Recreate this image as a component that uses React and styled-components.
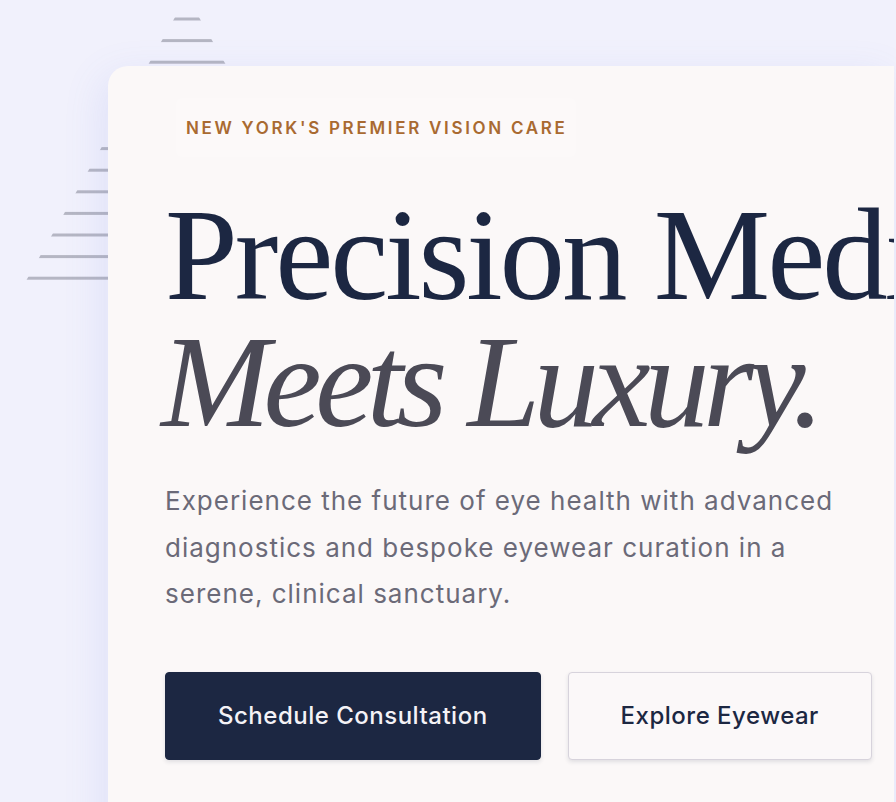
import styled, { createGlobalStyle } from 'styled-components'

const GlobalStyle = createGlobalStyle`
  html, body {
    margin: 0;
    padding: 0;
    background: #f1f1fc;
    overflow: hidden;
  }
  * {
    box-sizing: border-box;
  }
`

const Page = styled.main`
  position: relative;
  min-height: 100vh;
  padding: 66px 0 0 108px;
  overflow: hidden;
`

const Stripes = styled.svg`
  position: absolute;
  left: 22px;
  top: -4px;
  width: 330px;
  height: 292px;
  z-index: 0;
`

const Card = styled.section`
  position: relative;
  z-index: 1;
  width: 786px;
  min-height: 820px;
  padding: 32px 0 0 57px;
  background: #fbf8f8;
  border-radius: 20px 0 0 0;
  box-shadow: -6px 10px 40px rgba(96, 112, 220, 0.12);
  overflow: hidden;
`

const Eyebrow = styled.p`
  display: inline-block;
  margin: 0 0 0 11px;
  padding: 20px 8px 19px 10px;
  background: rgba(255, 255, 255, 0.22);
  border-radius: 6px;
  color: #a96a31;
  font-family: Inter, 'Noto Sans', sans-serif;
  font-size: 17px;
  font-weight: 600;
  letter-spacing: 2.7px;
  line-height: 20px;
  text-transform: uppercase;
`

const Heading = styled.h1`
  margin: 34px 0 0 0;
  font-family: 'Liberation Serif', 'DejaVu Serif', serif;
  font-weight: 400;
  font-size: 131px;
  line-height: 127px;
  color: #1c2742;
  white-space: nowrap;
`

const Line = styled.span`
  display: block;
  font-style: ${(p) => (p.$italic ? 'italic' : 'normal')};
  color: ${(p) => (p.$italic ? '#4b4a56' : '#1c2742')};
  letter-spacing: ${(p) => (p.$italic ? '-0.05em' : '-0.024em')};
  margin-left: ${(p) => (p.$italic ? '-4px' : '0')};
`

const Lead = styled.p`
  margin: 33px 0 0 0;
  max-width: 700px;
  font-family: Inter, 'Noto Sans', sans-serif;
  font-size: 26px;
  line-height: 46.5px;
  letter-spacing: 1px;
  color: #6b6a78;
`

const Actions = styled.div`
  display: flex;
  gap: 27px;
  margin-top: 54px;
`

const Button = styled.button`
  height: 88px;
  padding: 0 52px;
  border-radius: 4px;
  font-family: Inter, 'Noto Sans', sans-serif;
  font-size: 24px;
  font-weight: 500;
  letter-spacing: 0.5px;
  cursor: pointer;
  border: 1.5px solid ${(p) => (p.$primary ? '#1c2742' : '#d7d3dc')};
  background: ${(p) => (p.$primary ? '#1c2742' : '#fbf8f9')};
  color: ${(p) => (p.$primary ? '#f4f2f6' : '#1c2742')};
  box-shadow: 0 2px 4px rgba(28, 39, 66, 0.12);
`

const stripeRows = Array.from({ length: 14 }, (_, i) => 21.5 + i * 21.6)

const App = () => {
  return (
    <>
      <GlobalStyle />
      <Page>
        <Stripes viewBox="0 0 330 292" aria-hidden="true">
          <defs>
            <clipPath id="tri">
              <polygon points="165,0 330,292 0,292" />
            </clipPath>
          </defs>
          <g clipPath="url(#tri)" fill="#b5b6c3">
            {stripeRows.map((y) => (
              <rect key={y} x="0" y={y} width="330" height="3" />
            ))}
          </g>
        </Stripes>

        <Card>
          <Eyebrow>New York's Premier Vision Care</Eyebrow>
          <Heading>
            <Line>Precision Medicine</Line>
            <Line $italic>Meets Luxury.</Line>
          </Heading>
          <Lead>
            Experience the future of eye health with advanced diagnostics and
            bespoke eyewear curation in a serene, clinical sanctuary.
          </Lead>
          <Actions>
            <Button $primary>Schedule Consultation</Button>
            <Button>Explore Eyewear</Button>
          </Actions>
        </Card>
      </Page>
    </>
  )
}

export default App
